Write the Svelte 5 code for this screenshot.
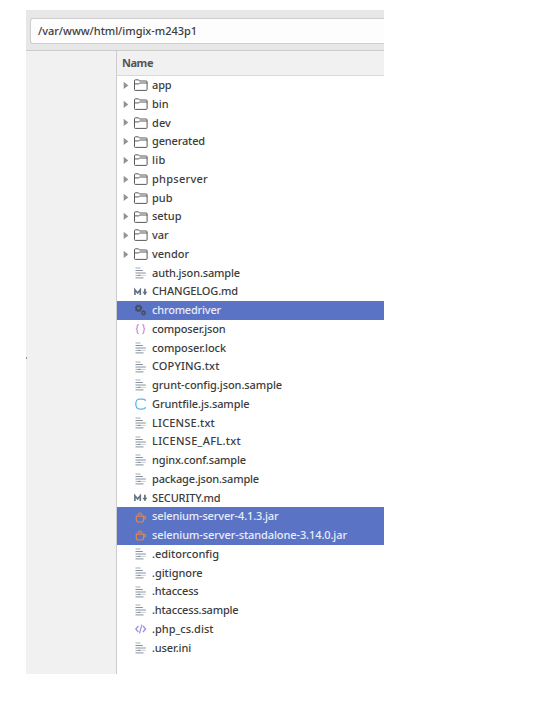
<script>
  const rows = [
    ['folder', 'app', 19.5], ['folder', 'bin', 16.5], ['folder', 'dev', 19], ['folder', 'generated', 53],
    ['folder', 'lib', 13.5], ['folder', 'phpserver', 56], ['folder', 'pub', 20.5], ['folder', 'setup', 29.5],
    ['folder', 'var', 16.5], ['folder', 'vendor', 37], ['text', 'auth.json.sample', 88],
    ['markdown', 'CHANGELOG.md', 86], ['gears', 'chromedriver', 69], ['braces', 'composer.json', 73.5],
    ['text', 'composer.lock', 74], ['text', 'COPYING.txt', 67.5], ['text', 'grunt-config.json.sample', 130],
    ['ring', 'Gruntfile.js.sample', 97.5], ['text', 'LICENSE.txt', 63], ['text', 'LICENSE_AFL.txt', 89],
    ['text', 'nginx.conf.sample', 94], ['text', 'package.json.sample', 107], ['markdown', 'SECURITY.md', 68.5],
    ['java', 'selenium-server-4.1.3.jar', 126.5], ['java', 'selenium-server-standalone-3.14.0.jar', 195],
    ['text', '.editorconfig', 67], ['text', '.gitignore', 50.5], ['text', '.htaccess', 46.5],
    ['text', '.htaccess.sample', 86.5], ['code', '.php_cs.dist', 61.5], ['text', '.user.ini', 39]
  ].map(([icon, name, width]) => ({ icon, name, width, selected: icon === 'gears' || icon === 'java' }));

  // Tracks a label so that it takes the given advance width.
  function fit(node, width) {
    const natural = node.getBoundingClientRect().width;
    node.style.letterSpacing = `${(width - natural) / node.textContent.length}px`;
  }
</script>

<main>
  <section class="window">
    <header class="toolbar">
      <div class="path"><span use:fit={159}>/var/www/html/imgix-m243p1</span></div>
    </header>
    <div class="body">
      <aside><i></i></aside>
      <div class="listing">
        <div class="heading"><span use:fit={31}>Name</span></div>
        <div class="rows">
          {#each rows as row}
            <div class="row" class:selected={row.selected}>
              <svg class="arrow" viewBox="0 0 6 9">
                {#if row.icon === 'folder'}<path d="M.7 .8 5.3 4.4.7 8Z" fill="#929292" />{/if}
              </svg>
              <svg class="icon" viewBox="0 0 16 14" fill="none">
                {#if row.icon === 'folder'}
                  <path d="M1.5 11.6V2.8q0-1 .9-1h3l1.2 1.2h6.6q.9 0 .9.9v7.7q0 .8-.8.8h-11q-.8 0-.8-.8ZM1.5 5.9h4.3l1-.9h7.3" stroke="#505050" stroke-width=".95" />
                {:else if row.icon === 'text'}
                  <path d="M2.5 2h5M2.5 9.4h5.2" stroke="#a3acb7" />
                  <path d="M2.5 4.5h7.3M2.5 7h10.3M5 9.4h2.5M2.5 11.9h8" stroke="#85909c" />
                  <path d="M7.5 9.4h5.3" stroke="#a3acb7" stroke-width=".6" />
                {:else if row.icon === 'markdown'}
                  <path d="M1.9 10V4.7L4.6 7.9l2.7-3.2V10" stroke="#60717f" stroke-width="1.6" />
                  <path d="M11.9 3.8v5.8" stroke="#60717f" stroke-width="1.7" />
                  <path d="M9.4 6.8h5L11.9 10Z" fill="#60717f" />
                {:else if row.icon === 'gears'}
                  <circle cx="5.5" cy="5.2" r="2.2" stroke="#484a56" stroke-width="1.6" />
                  <circle cx="5.5" cy="5.2" r="3.3" stroke="#484a56" stroke-width="1.1" stroke-dasharray="1.4 1.2" />
                  <circle cx="10.5" cy="9.9" r="1.5" stroke="#484a56" stroke-width="1.2" />
                  <circle cx="10.5" cy="9.9" r="2.3" stroke="#484a56" stroke-width=".8" stroke-dasharray="1 .8" />
                {:else if row.icon === 'braces'}
                  <path d="M5.8 2.5Q4.2 2.5 4.2 4v1.3Q4.2 6.7 2.9 7q1.3.3 1.3 1.7V10q0 1.5 1.6 1.5M9.2 2.5q1.6 0 1.6 1.5v1.3q0 1.4 1.3 1.7-1.3.3-1.3 1.7V10q0 1.5-1.6 1.5" stroke="#d08bdd" stroke-width="1.25" />
                {:else if row.icon === 'ring'}
                  <path d="M12.2 4V2.9q-1-.9-3.1-.9H6.3Q2.8 2.5 2.8 7t3.5 5h2.8q2.1 0 3.1-.9V10" stroke="#55b5ec" stroke-width="1.25" />
                {:else if row.icon === 'java'}
                  <path d="M3.3 6.2h7.2v3.6q0 2.2-1.9 2.2H5.2q-1.9 0-1.9-2.2ZM10.5 6.7h1.3q.9 0 .9 1.1t-.9 1.2h-1.3M5.3 4.9V3.3M7 4.5V2M8.7 4.9V3.3" stroke="#df8750" stroke-width="1.2" />
                {:else}
                  <path d="M5.4 4 2.8 7l2.6 3M10 4l2.6 3L10 10M8.9 2.7 6.5 11.3" stroke="#a08be0" stroke-width="1.2" />
                {/if}
              </svg>
              <span use:fit={row.width}>{row.name}</span>
            </div>
          {/each}
        </div>
      </div>
    </div>
  </section>
</main>

<style>
  :global(body) { margin: 0; background: #fff; }
  main { box-sizing: border-box; width: 556px; height: 705px; padding: 10px 0 0 26px; background: #fff; font: 500 11px/18.75px "Noto Sans", "Open Sans", sans-serif; color: #3c3c3c; }
  span { white-space: pre; }
  .window { display: flex; flex-direction: column; width: 358px; height: 664px; overflow: hidden; background: #f1f1f1; }
  .toolbar { box-sizing: border-box; height: 41px; padding: 8px 0 0 4px; background: #e7e7e7; border-bottom: 1px solid #cbcbcb; }
  .path { box-sizing: border-box; height: 26px; padding-left: 7px; border: 1px solid #cecece; border-right: 0; border-radius: 3px 0 0 3px; background: #fdfdfd; line-height: 24px; }
  .body { display: flex; flex: 1; }
  aside { width: 91px; box-sizing: border-box; padding-top: 306px; border-right: 1px solid #ccc; }
  aside i { display: block; width: 1px; height: 2px; background: #8c8c8c; }
  .listing { flex: 1; background: #fff; }
  .heading { box-sizing: border-box; height: 25px; padding-left: 5px; border-bottom: 1px solid #d8d8d8; background: #f1f1f1; color: #555; font-weight: 700; line-height: 24px; }
  .row { display: flex; align-items: center; height: 18.75px; padding-left: 6px; }
  .selected { background: #5b73c4; color: #e9edfa; }
  .arrow { width: 6px; height: 9px; margin-right: 4px; }
  .icon { width: 16px; height: 14px; margin-right: 3px; }
</style>
